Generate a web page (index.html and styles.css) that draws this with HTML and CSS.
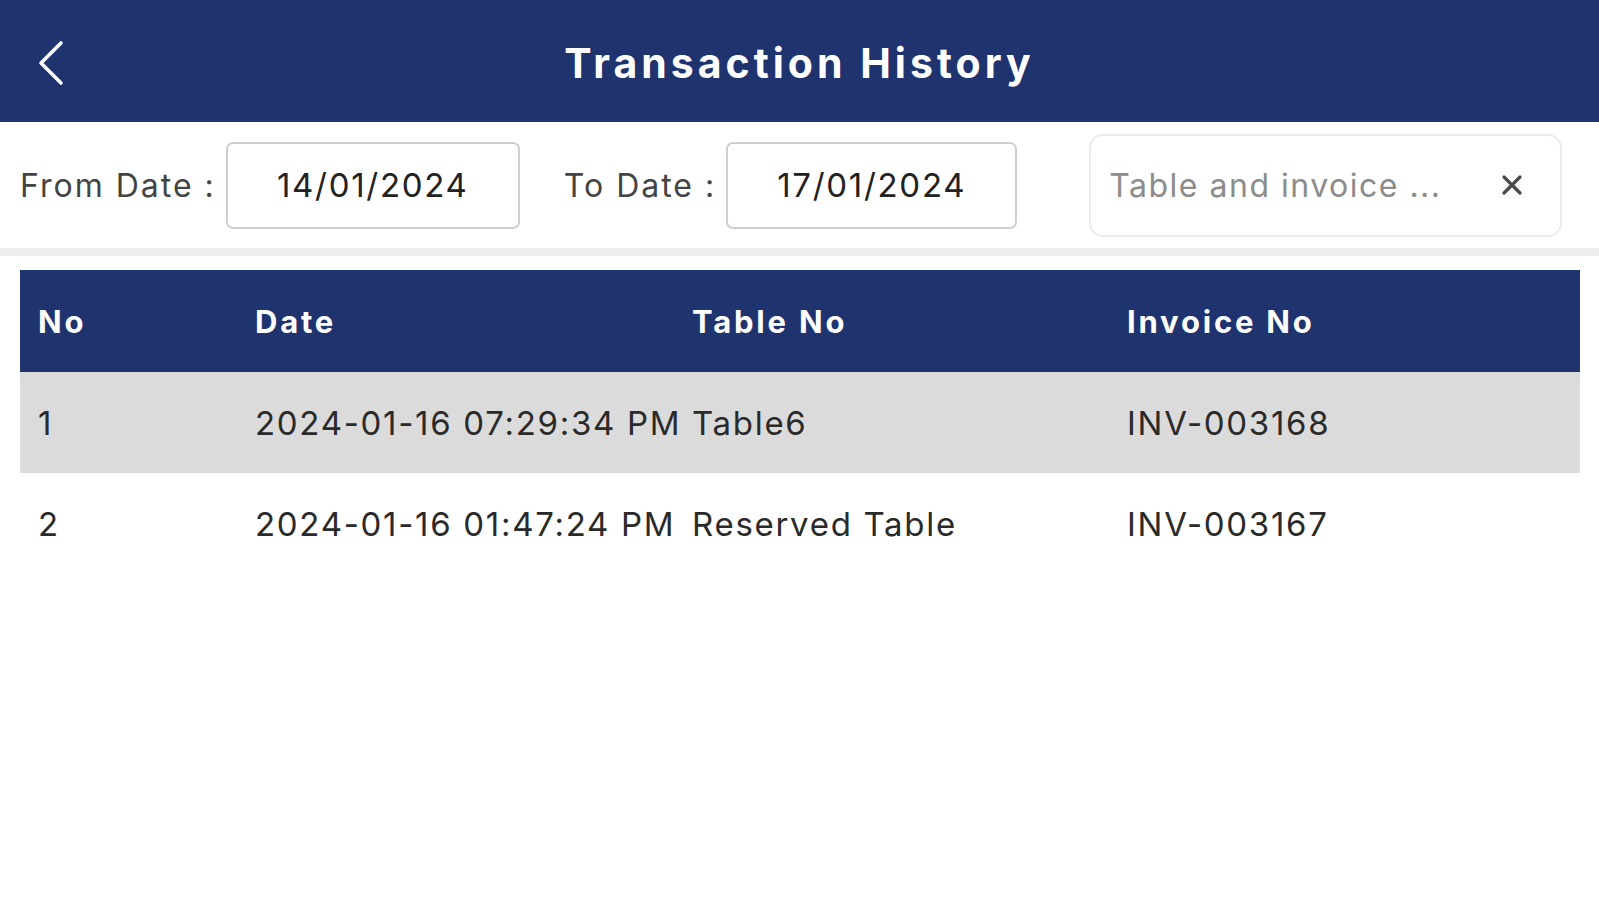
FILE: index.html
```html
<!DOCTYPE html>
<html lang="en">
<head>
<meta charset="utf-8">
<title>Transaction History</title>
<link rel="stylesheet" href="styles.css">
</head>
<body>
<header class="topbar">
  <button class="back" aria-label="Back">
    <svg width="30" height="46" viewBox="0 0 30 46"><path d="M24 3 L4 23 L24 43" fill="none" stroke="#fff" stroke-width="3.6" stroke-linecap="round" stroke-linejoin="round"/></svg>
  </button>
  <h1 class="title">Transaction History</h1>
  <span></span>
</header>
<section class="filters">
  <label class="lbl">From Date :</label>
  <div class="datebox">14/01/2024</div>
  <label class="lbl lbl-to">To Date :</label>
  <div class="datebox datebox-to">17/01/2024</div>
  <div class="search">
    <span class="placeholder">Table and invoice ...</span>
    <svg class="clear" width="24" height="24" viewBox="0 0 24 24"><path d="M4 4 L20 20 M20 4 L4 20" stroke="#4a4a4a" stroke-width="3.2" stroke-linecap="round"/></svg>
  </div>
</section>
<section class="table">
  <div class="row head">
    <div class="cell">No</div><div class="cell">Date</div><div class="cell">Table No</div><div class="cell">Invoice No</div>
  </div>
  <div class="row odd">
    <div class="cell">1</div><div class="cell">2024-01-16 07:29:34 PM</div><div class="cell">Table6</div><div class="cell">INV-003168</div>
  </div>
  <div class="row">
    <div class="cell">2</div><div class="cell">2024-01-16 01:47:24 PM</div><div class="cell">Reserved Table</div><div class="cell">INV-003167</div>
  </div>
</section>
</body>
</html>
```

FILE: styles.css
```css
* { box-sizing: border-box; }
html, body { margin: 0; padding: 0; background: #fff; }
body { font-family: Inter, "Liberation Sans", Arial, sans-serif; color: #2a2a2a; width: 1599px; height: 900px; overflow: hidden; }

.topbar {
  height: 122px;
  background: #1f336f;
  display: grid;
  grid-template-columns: 1fr auto 1fr;
  align-items: center;
}
.back {
  background: none; border: 0; padding: 0; margin: 4px 0 0 37px;
  width: 30px; height: 46px; display: flex; justify-self: start;
}
.title {
  margin: 4px 0 0;
  color: #fff;
  font-size: 41px;
  font-weight: 700;
  letter-spacing: 4px;
}

.filters {
  height: 134px;
  display: flex;
  align-items: center;
  padding-left: 20px;
  border-bottom: 8px solid #efefef;
}
.lbl { font-size: 32px; color: #444; letter-spacing: 2px; }
.datebox {
  width: 294px; height: 87px;
  margin-left: 10px;
  border: 2px solid #cfcfcf;
  border-radius: 7px;
  display: flex; align-items: center; justify-content: center;
  font-size: 33px; color: #222; letter-spacing: 1.7px;
}
.lbl-to { margin-left: 44px; }
.datebox-to { width: 291px; }
.search {
  margin-left: 72px;
  width: 473px; height: 103px;
  border: 2px solid #ececec;
  border-radius: 14px;
  display: flex; align-items: center;
  padding-left: 18px; padding-right: 36px;
}
.placeholder { flex: 1; font-size: 32px; color: #8c8c8c; letter-spacing: 1.5px; }
.clear { flex: none; }

.table { margin: 14px 19px 0 20px; }
.row {
  display: grid;
  grid-template-columns: 217px 437px 435px 1fr;
  height: 101px;
  align-items: center;
}
.row.head { background: #1f336f; color: #fff; font-weight: 700; height: 102px; }
.row.odd { background: #dbdbdb; }
.cell { padding-left: 18px; font-size: 33px; letter-spacing: 1.7px; white-space: nowrap; }
.head .cell { font-size: 31px; letter-spacing: 2.8px; }
```
